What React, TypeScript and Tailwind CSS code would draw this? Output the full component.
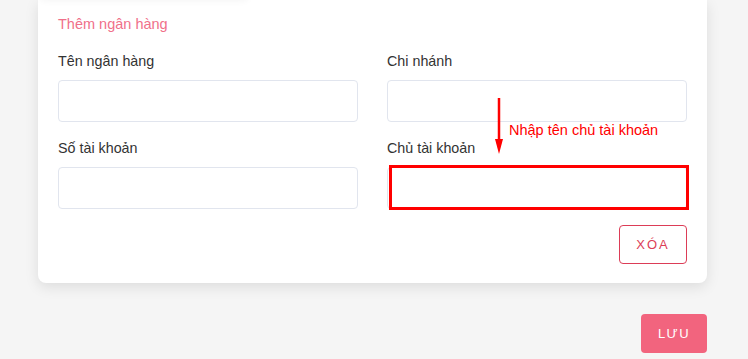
import React from "react";

function Field({ label, highlight }: { label: string; highlight?: boolean }) {
  return (
    <div className="flex flex-col">
      <label className="text-[14.3px] leading-5 text-[#333333] mb-[9px]">{label}</label>
      <div className="relative">
        <input className="block w-full h-[42px] border border-[#e1e5ee] rounded-[4px] bg-white outline-none" />
        {highlight && (
          <div className="absolute left-[2px] -right-[2px] -top-[2px] -bottom-[1px] border-[3px] border-[#ff0000] pointer-events-none" />
        )}
      </div>
    </div>
  );
}

export default function App() {
  return (
    <div
      className="relative min-h-[359px] bg-[#f5f5f5] overflow-hidden"
      style={{ fontFamily: '"Liberation Sans", Arial, sans-serif' }}
    >
      <div className="relative ml-[38px] w-[669px] bg-white rounded-b-lg shadow-[0_4px_14px_rgba(0,0,0,0.10)] px-5 pt-[14px] pb-[19px]">
        <div className="absolute left-0 -top-[20px] w-[212px] h-[20px] rounded-lg shadow-[0_2px_6px_rgba(0,0,0,0.035)] bg-white" />
        <div className="text-[14.5px] leading-5 text-[#f0708a]">Thêm ngân hàng</div>
        <div className="grid grid-cols-2 gap-x-[29px] gap-y-4 mt-[17px]">
          <Field label="Tên ngân hàng" />
          <Field label="Chi nhánh" />
          <Field label="Số tài khoản" />
          <Field label="Chủ tài khoản" highlight />
        </div>
        <div className="flex justify-end mt-4">
          <button className="w-[68px] h-[39px] border border-[#dc3d57] rounded-[4px] text-[#dc3d57] text-[13px] tracking-[2px] bg-white">
            XÓA
          </button>
        </div>
      </div>
      <div className="flex justify-end w-[707px] mt-[31px]">
        <button className="w-[66px] h-[39px] rounded-[4px] bg-[#f2647e] text-white text-[13px] tracking-[1.5px]">
          LƯU
        </button>
      </div>

      <svg className="absolute left-[494px] top-[97px]" width="10" height="58" viewBox="0 0 10 58">
        <line x1="5" y1="1" x2="5" y2="44" stroke="#ff0000" strokeWidth="2.5" />
        <polygon points="1,42 9,42 5,57" fill="#ff0000" />
      </svg>
      <div className="absolute left-[509px] top-[120px] text-[14.5px] leading-[20px] text-[#ff0000] whitespace-nowrap">
        Nhập tên chủ tài khoản
      </div>
    </div>
  );
}
